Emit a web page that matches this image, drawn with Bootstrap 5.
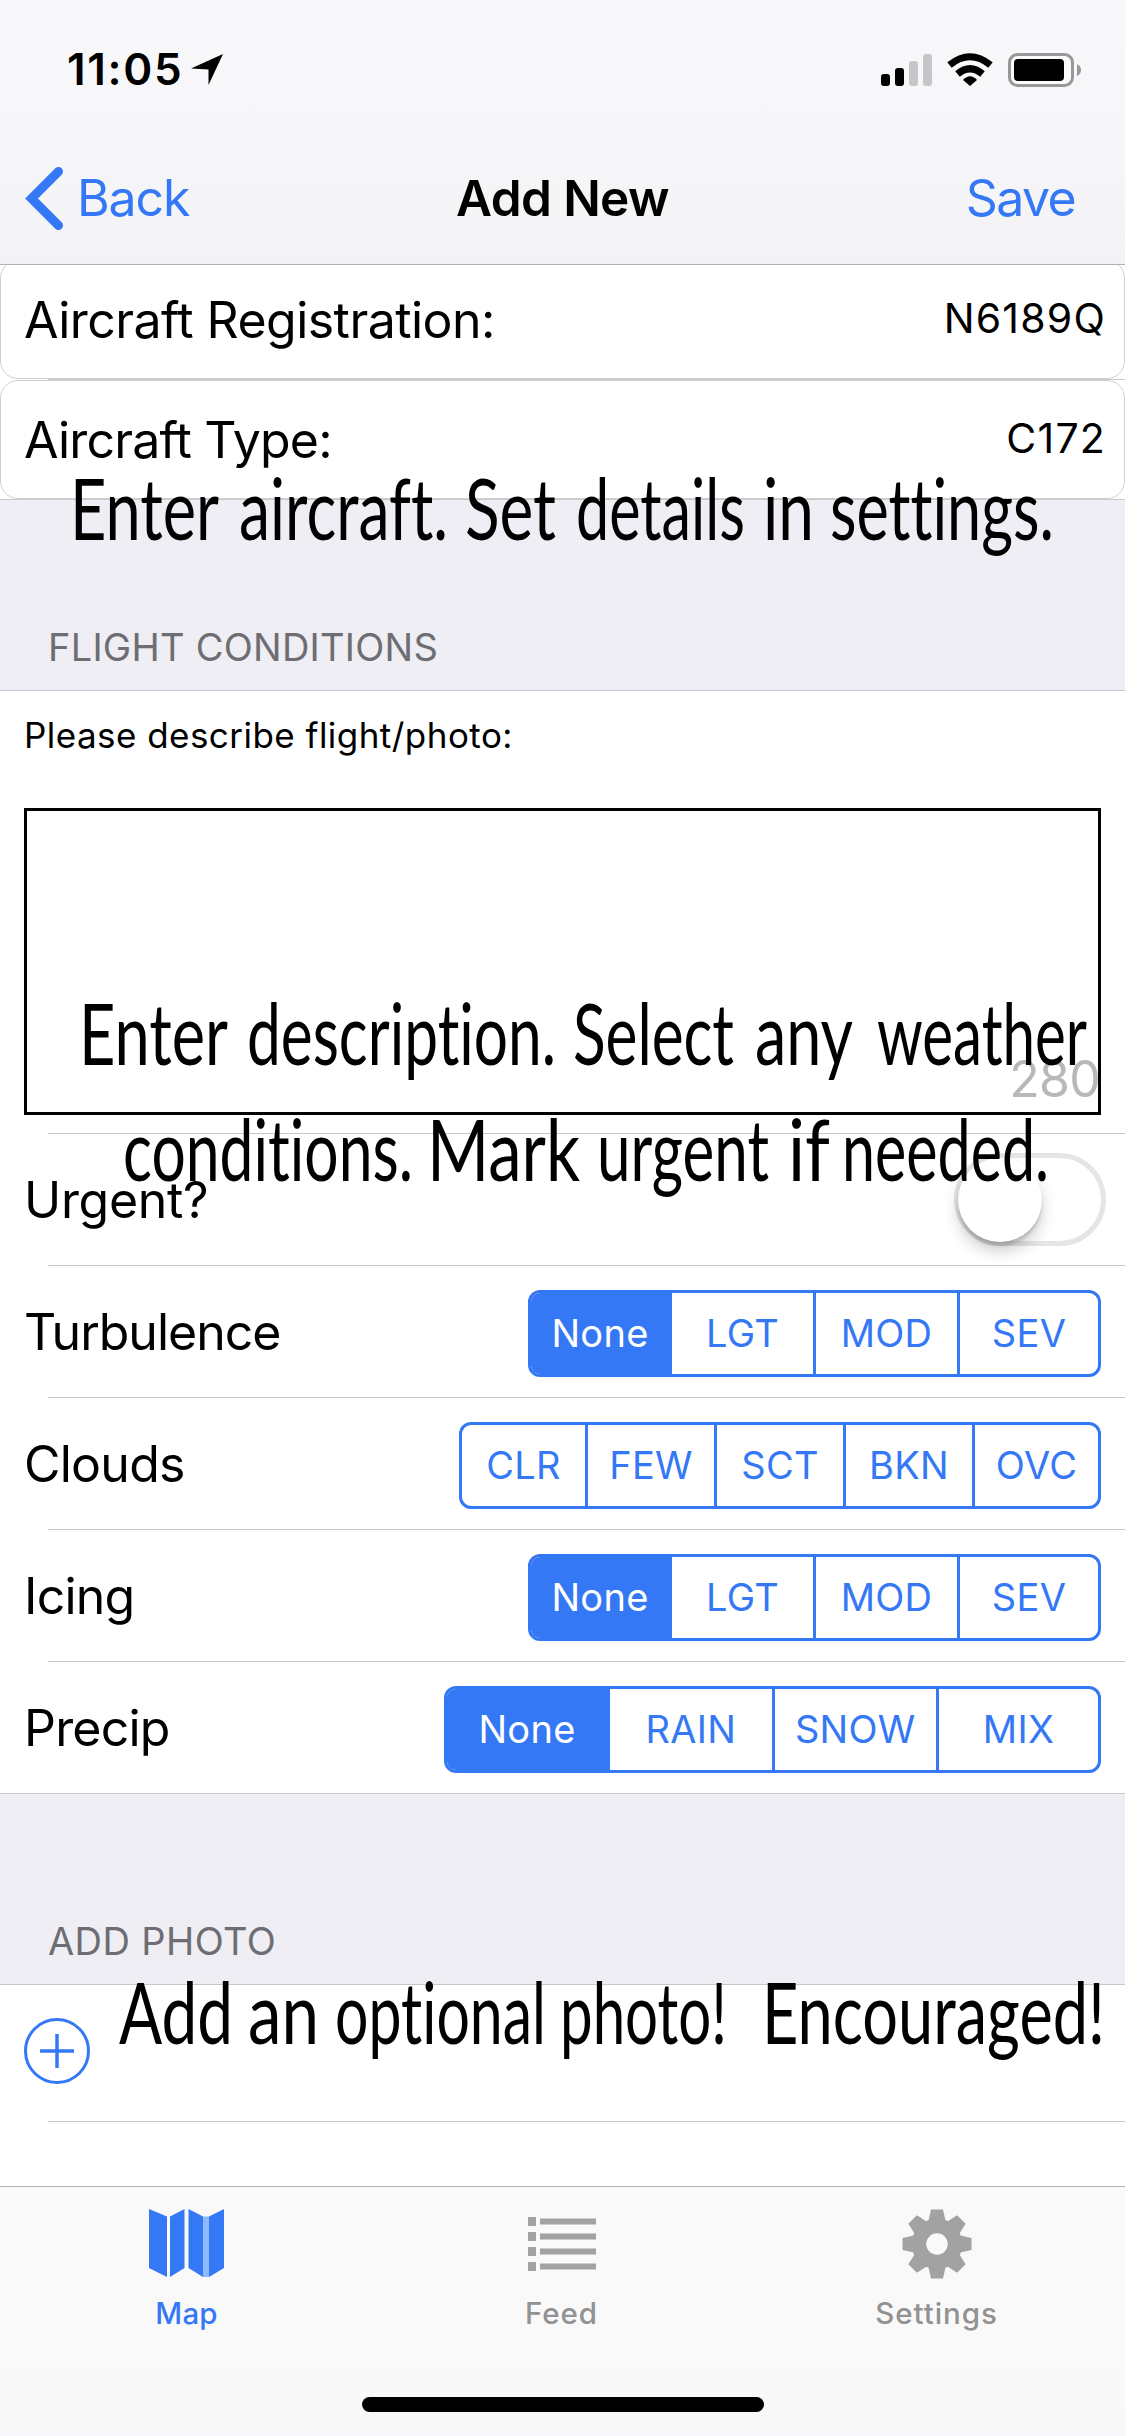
<!DOCTYPE html>
<html lang="en">
<head>
<meta charset="utf-8">
<meta name="viewport" content="width=device-width, initial-scale=1">
<title>Add New</title>
<link rel="stylesheet" href="https://cdn.jsdelivr.net/npm/bootstrap@5.3.0/dist/css/bootstrap.min.css">
<script src="https://cdn.jsdelivr.net/npm/bootstrap@5.3.0/dist/js/bootstrap.bundle.min.js"></script>
<style>
:root{--tint:#3478f6;--hair:#c8c7cc;}
body{font-family:Inter,"Liberation Sans",sans-serif;font-size:50px;line-height:60px;color:#000;background:#fff;}
.screen{width:1125px;height:2436px;overflow:hidden;}
.topbar{height:265px;background:linear-gradient(#f8f8fa,#f7f7f9 45%,#f3f3f5);border-bottom:1px solid #b2b2b2;z-index:2;}
.status{height:132px;padding:6px 44px 0 67px;}
.clock{font-size:44px;font-weight:600;letter-spacing:1.68px;}
.navline{height:132px;}
.tint{color:var(--tint);}
.side{flex:1 1 0;}
.back-lbl{letter-spacing:-1.12px;margin-left:13px;}
.save-lbl{letter-spacing:-1.6px;padding-right:50px;}
.title-lbl{font-size:49.5px;font-weight:600;letter-spacing:-.6px;}
.field{height:119px;padding:0 19px 0 23px;border:1px solid #d0d0d0;border-radius:18px;background:#fff;}
.field.first{margin-top:-5px;}
.field .val{font-size:41px;letter-spacing:1.2px;margin-top:-3px;margin-right:-1px;}
.inset-line{height:1px;margin-left:48px;background:var(--hair);}
.group-head{height:192px;background:#efeef4;border-top:1px solid var(--hair);border-bottom:1px solid var(--hair);padding:0 48px 13px;font-size:38px;letter-spacing:.25px;color:#6d6d72;}
.describe{height:442px;padding:27px 24px 0 24px;}
.describe label{font-size:35px;line-height:35px;letter-spacing:.46px;display:block;}
.notebox{height:307px;margin-top:55px;border:3px solid #000;letter-spacing:-.71px;color:#b8b8b8;line-height:62px;padding-bottom:2px;}
.notebox span{margin-right:-2px;}
.option{height:131px;padding:0 24px;}
.seg{height:87px;margin-top:3px;border:3px solid var(--tint);border-radius:12px;font-size:38px;letter-spacing:.3px;color:var(--tint);overflow:hidden;}
.seg>span{flex:1 1 0;display:flex;align-items:center;justify-content:center;border-left:3px solid var(--tint);}
.seg>span:first-child{border-left:0;}
.seg>.on{background:var(--tint);color:#fff;}
.w4{width:573px;}.w5{width:642px;}.w4w{width:657px;}
.w4>span:first-child{flex:0 0 138px;}.w4>span:last-child{flex:0 0 141px;}
.w5>span:first-child{flex:0 0 123px;}.w5>span:last-child{flex:0 0 126px;}
.w4w>span:first-child{flex:0 0 160px;}.w4w>span:last-child{flex:0 0 162px;}
.toggle{width:152px;height:93px;border:5px solid #e5e5e5;border-radius:47px;margin-right:-5px;background:#fff;}
.knob{width:84px;height:84px;margin-left:-1px;border-radius:50%;background:#fff;box-shadow:0 9px 16px rgba(0,0,0,.2),0 4px 3px rgba(0,0,0,.14);}
.photo-row{height:136px;padding:0 0 5px 24px;}
.tabs{height:250px;margin-top:64px;border-top:1px solid #b2b2b2;background:linear-gradient(#f9f9f9 70%,#f8f8fa);}
.tab-item{width:375px;padding:20px 2px 0 0;font-size:29.5px;line-height:36px;font-weight:500;color:#929292;letter-spacing:.95px;}
.tab-item svg{display:block;margin-bottom:16px;}
.tab-item.active{color:var(--tint);letter-spacing:.16px;}
.home{width:402px;height:15px;border-radius:8px;background:#000;margin:66px auto 0;}
.notes{left:0;top:0;z-index:5;pointer-events:none;font-family:Lato,sans-serif;font-size:86px;font-variant-ligatures:none;}
</style>
</head>
<body>
<div class="screen position-relative">
  <header class="topbar position-relative">
    <div class="status d-flex align-items-center justify-content-between">
      <div class="d-flex align-items-center">
        <span class="clock">11:05</span>
        <svg class="ms-2" width="33" height="33" viewBox="0 0 33 33"><path d="M32 1 17.500 32V16.500L0 15.500Z"/></svg>
      </div>
      <svg width="202" height="36" viewBox="879 50 202 36">
        <rect x="881" y="73" width="9" height="12" rx="3"/><rect x="895" y="67" width="9" height="18" rx="3"/>
        <g fill="#c6c6c8"><rect x="909" y="60" width="9" height="25" rx="3"/><rect x="923" y="53" width="9" height="32" rx="3"/></g>
        <g fill="none" stroke="#000" stroke-width="7"><path d="M949.500 64Q970 47.500 990.500 64"/><path d="M957.500 73Q970 62.500 982.500 73"/></g>
        <path d="M963 79Q970 71.500 977 79L970 85Z"/>
        <rect x="1009.500" y="53.500" width="63" height="31" rx="8" fill="#fbfbfc" stroke="#98989a" stroke-width="3"/>
        <rect x="1014" y="58" width="50" height="22" rx="4"/>
        <path d="M1077 63Q1081 65 1081 69T1077 75Z" fill="#98989a"/>
      </svg>
    </div>
    <nav class="navline d-flex align-items-center">
      <div class="side d-flex align-items-center tint">
        <svg class="flex-shrink-0" width="64" height="66" viewBox="0 165 64 66"><path d="M58.500 171.500 31.500 198.500l27 27" fill="none" stroke="#3478f6" stroke-width="9" stroke-linecap="round"/></svg>
        <span class="back-lbl">Back</span>
      </div>
      <span class="title-lbl">Add New</span>
      <div class="side text-end tint"><span class="save-lbl">Save</span></div>
    </nav>
  </header>

  <main>
    <div class="field first d-flex align-items-center justify-content-between"><span style="letter-spacing:-.55px">Aircraft Registration:</span><span class="val">N6189Q</span></div>
    <div class="inset-line"></div>
    <div class="field d-flex align-items-center justify-content-between"><span style="letter-spacing:-.8px">Aircraft Type:</span><span class="val">C172</span></div>

    <div class="group-head d-flex align-items-end"><span>FLIGHT CONDITIONS</span></div>

    <div class="describe">
      <label>Please describe flight/photo:</label>
      <div class="notebox d-flex align-items-end justify-content-end"><span>280</span></div>
    </div>
    <div class="inset-line"></div>
    <div class="option d-flex align-items-center justify-content-between"><span style="letter-spacing:-.3px">Urgent?</span><div class="toggle"><div class="knob"></div></div></div>
    <div class="inset-line"></div>
    <div class="option d-flex align-items-center justify-content-between"><span style="letter-spacing:-1px">Turbulence</span>
      <div class="seg w4 d-flex"><span class="on">None</span><span>LGT</span><span>MOD</span><span>SEV</span></div></div>
    <div class="inset-line"></div>
    <div class="option d-flex align-items-center justify-content-between"><span style="letter-spacing:-.76px">Clouds</span>
      <div class="seg w5 d-flex"><span>CLR</span><span>FEW</span><span>SCT</span><span>BKN</span><span>OVC</span></div></div>
    <div class="inset-line"></div>
    <div class="option d-flex align-items-center justify-content-between"><span style="letter-spacing:-.8px">Icing</span>
      <div class="seg w4 d-flex"><span class="on">None</span><span>LGT</span><span>MOD</span><span>SEV</span></div></div>
    <div class="inset-line"></div>
    <div class="option d-flex align-items-center justify-content-between"><span style="letter-spacing:-.8px">Precip</span>
      <div class="seg w4w d-flex"><span class="on">None</span><span>RAIN</span><span>SNOW</span><span>MIX</span></div></div>

    <div class="group-head d-flex align-items-end"><span style="letter-spacing:.4px">ADD PHOTO</span></div>

    <div class="photo-row d-flex align-items-center">
      <svg width="66" height="66" viewBox="0 0 66 66" fill="none" stroke="#3478f6" stroke-width="3"><circle cx="33" cy="33" r="31.500"/><path d="M16 33h34M33 16v34" stroke-width="3.500"/></svg>
    </div>
    <div class="inset-line"></div>
  </main>

  <footer class="tabs">
    <div class="d-flex">
      <div class="tab-item active d-flex flex-column align-items-center">
        <svg width="75" height="72" viewBox="0 0 75 72" fill="#3478f6"><path d="M0 2 18 9.500V70L0 61ZM21 9.500 35.500 2V61L21 70ZM39.500 2 54 9.500V70L39.500 61ZM60 9.500 75 2V61L60 70Z"/><path d="M54 9.500h6V70h-6z" fill="#8dbafb"/></svg>
        <span>Map</span>
      </div>
      <div class="tab-item d-flex flex-column align-items-center">
        <svg width="70" height="72" viewBox="0 0 70 72" fill="#a2a2a2"><path d="M1 10h8v9H1zM1 25h8v9H1zM1 40h8v9H1zM1 55h8v9H1zM13 11.500h56v6H13zM13 26.500h56v6H13zM13 41.500h56v6H13zM13 56.500h56v6H13z"/></svg>
        <span>Feed</span>
      </div>
      <div class="tab-item d-flex flex-column align-items-center">
        <svg width="70" height="72" viewBox="-35 -37 70 72" fill="#a2a2a2">
          <defs><path id="tooth" d="M-6-34.500H6L9-21H-9Z"/></defs>
          <circle r="18" fill="none" stroke="#a2a2a2" stroke-width="14.500"/>
          <use href="#tooth"/><use href="#tooth" transform="rotate(45)"/><use href="#tooth" transform="rotate(90)"/><use href="#tooth" transform="rotate(135)"/><use href="#tooth" transform="rotate(180)"/><use href="#tooth" transform="rotate(225)"/><use href="#tooth" transform="rotate(270)"/><use href="#tooth" transform="rotate(315)"/>
        </svg>
        <span>Settings</span>
      </div>
    </div>
    <div class="home"></div>
  </footer>

  <!-- Tutorial captions laid over the form -->
  <svg class="notes position-absolute" width="1125" height="2436" viewBox="0 0 1125 2436">
    <g>
      <text x="70" y="540" textLength="149" lengthAdjust="spacingAndGlyphs">Enter</text>
      <text x="239" y="540" textLength="209" lengthAdjust="spacingAndGlyphs">aircraft.</text>
      <text x="465" y="540" textLength="91" lengthAdjust="spacingAndGlyphs">Set</text>
      <text x="576" y="540" textLength="169" lengthAdjust="spacingAndGlyphs">details</text>
      <text x="763" y="540" textLength="51" lengthAdjust="spacingAndGlyphs">in</text>
      <text x="830" y="540" textLength="224" lengthAdjust="spacingAndGlyphs">settings.</text>
    </g>
    <g>
      <text x="79" y="1065" textLength="149" lengthAdjust="spacingAndGlyphs">Enter</text>
      <text x="247" y="1065" textLength="309" lengthAdjust="spacingAndGlyphs">description.</text>
      <text x="573" y="1065" textLength="161" lengthAdjust="spacingAndGlyphs">Select</text>
      <text x="755" y="1065" textLength="98" lengthAdjust="spacingAndGlyphs">any</text>
      <text x="877" y="1065" textLength="210" lengthAdjust="spacingAndGlyphs">weather</text>
    </g>
    <g>
      <text x="123" y="1181" textLength="290" lengthAdjust="spacingAndGlyphs">conditions.</text>
      <text x="427" y="1181" textLength="153" lengthAdjust="spacingAndGlyphs">Mark</text>
      <text x="597" y="1181" textLength="172" lengthAdjust="spacingAndGlyphs">urgent</text>
      <text x="788" y="1181" textLength="42" lengthAdjust="spacingAndGlyphs">if</text>
      <text x="842" y="1181" textLength="207" lengthAdjust="spacingAndGlyphs">needed.</text>
    </g>
    <g>
      <text x="119" y="2044" textLength="114" lengthAdjust="spacingAndGlyphs">Add</text>
      <text x="248" y="2044" textLength="71" lengthAdjust="spacingAndGlyphs">an</text>
      <text x="335" y="2044" textLength="211" lengthAdjust="spacingAndGlyphs">optional</text>
      <text x="560" y="2044" textLength="167" lengthAdjust="spacingAndGlyphs">photo!</text>
      <text x="762" y="2044" textLength="343" lengthAdjust="spacingAndGlyphs">Encouraged!</text>
    </g>
  </svg>
</div>
</body>
</html>
